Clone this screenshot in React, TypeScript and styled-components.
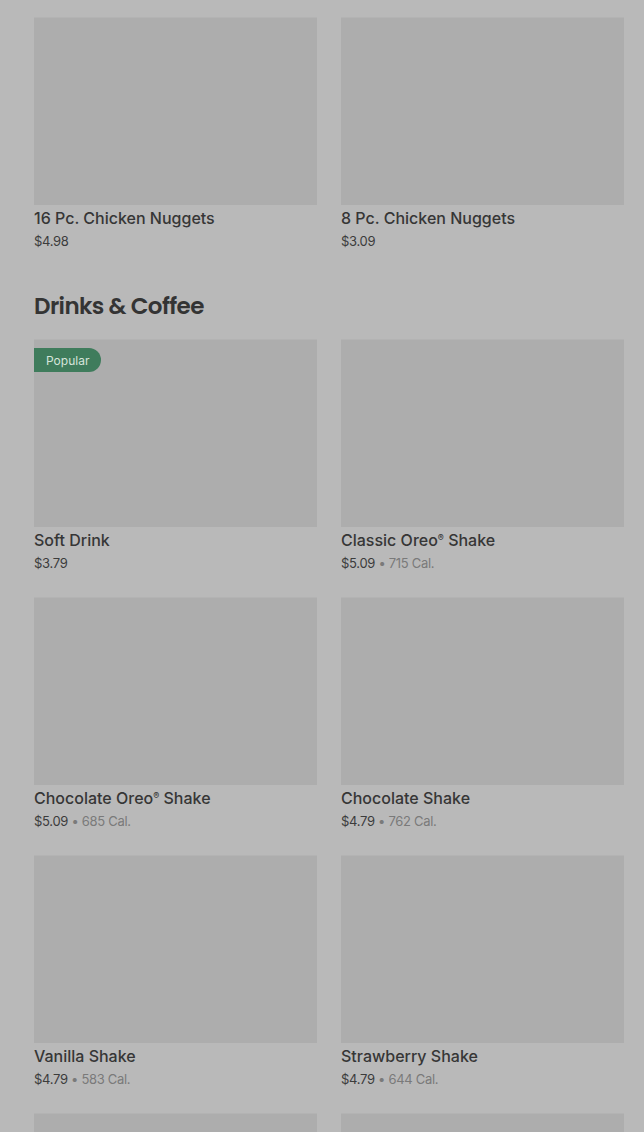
import React from "react";
import styled, { createGlobalStyle } from "styled-components";

const Global = createGlobalStyle`
  html, body { margin: 0; padding: 0; background: #b9b9b9; }
  body { font-family: Inter, "Noto Sans", sans-serif; -webkit-font-smoothing: antialiased; }
`;

const Page = styled.div`
  padding: 17px 20px 0 34px;
  background: #b9b9b9;
  height: 1132px;
  box-sizing: border-box;
  overflow: hidden;
`;

const Grid = styled.div`
  display: grid;
  grid-template-columns: 283px 283px;
  column-gap: 24px;
  row-gap: 24px;
`;

const Heading = styled.h2`
  margin: 39px 0 17px;
  font-family: Poppins, Inter, "Noto Sans", sans-serif;
  font-size: 23px;
  line-height: 32px;
  font-weight: 600;
  letter-spacing: -0.6px;
  color: #343434;
`;

const Card = styled.div`
  display: flex;
  flex-direction: column;
`;

const Thumb = styled.div`
  position: relative;
  height: 188px;
  background: #adadad;
  border-top: 1px solid #b3b3b3;
  box-sizing: border-box;
`;

const Badge = styled.span`
  position: absolute;
  left: 0;
  top: 8px;
  height: 24px;
  padding: 0 12px;
  display: flex;
  align-items: center;
  background: #3f7c5c;
  color: #d6e4db;
  font-size: 12px;
  border-radius: 0 12px 12px 0;
`;

const Title = styled.div`
  margin-top: 3px;
  font-size: 16px;
  line-height: 20px;
  font-weight: 500;
  color: #363636;
`;

const Meta = styled.div`
  margin-top: 3px;
  font-size: 13px;
  line-height: 20px;
  color: #3c3c3c;
  letter-spacing: -0.3px;
`;

const Cal = styled.span`
  color: #7a7a7a;
`;

type Item = { name: React.ReactNode; price: string; cal?: string; popular?: boolean };

const Reg = styled.sup`
  font-size: 9px;
  vertical-align: 5px;
  line-height: 0;
`;

const nuggets: Item[] = [
  { name: "16 Pc. Chicken Nuggets", price: "$4.98" },
  { name: "8 Pc. Chicken Nuggets", price: "$3.09" },
];

const drinks: Item[] = [
  { name: "Soft Drink", price: "$3.79", popular: true },
  { name: <>Classic Oreo<Reg>®</Reg> Shake</>, price: "$5.09", cal: "715 Cal." },
  { name: <>Chocolate Oreo<Reg>®</Reg> Shake</>, price: "$5.09", cal: "685 Cal." },
  { name: "Chocolate Shake", price: "$4.79", cal: "762 Cal." },
  { name: "Vanilla Shake", price: "$4.79", cal: "583 Cal." },
  { name: "Strawberry Shake", price: "$4.79", cal: "644 Cal." },
  { name: "", price: "" },
  { name: "", price: "" },
];

function ItemCard({ item }: { item: Item }) {
  return (
    <Card>
      <Thumb>{item.popular && <Badge>Popular</Badge>}</Thumb>
      <Title>{item.name}</Title>
      <Meta>
        {item.price}
        {item.cal && <Cal> • {item.cal}</Cal>}
      </Meta>
    </Card>
  );
}

export default function App() {
  return (
    <>
      <Global />
      <Page>
        <Grid>
          {nuggets.map((it, i) => (
            <ItemCard key={i} item={it} />
          ))}
        </Grid>
        <Heading>Drinks &amp; Coffee</Heading>
        <Grid>
          {drinks.map((it, i) => (
            <ItemCard key={i} item={it} />
          ))}
        </Grid>
      </Page>
    </>
  );
}
